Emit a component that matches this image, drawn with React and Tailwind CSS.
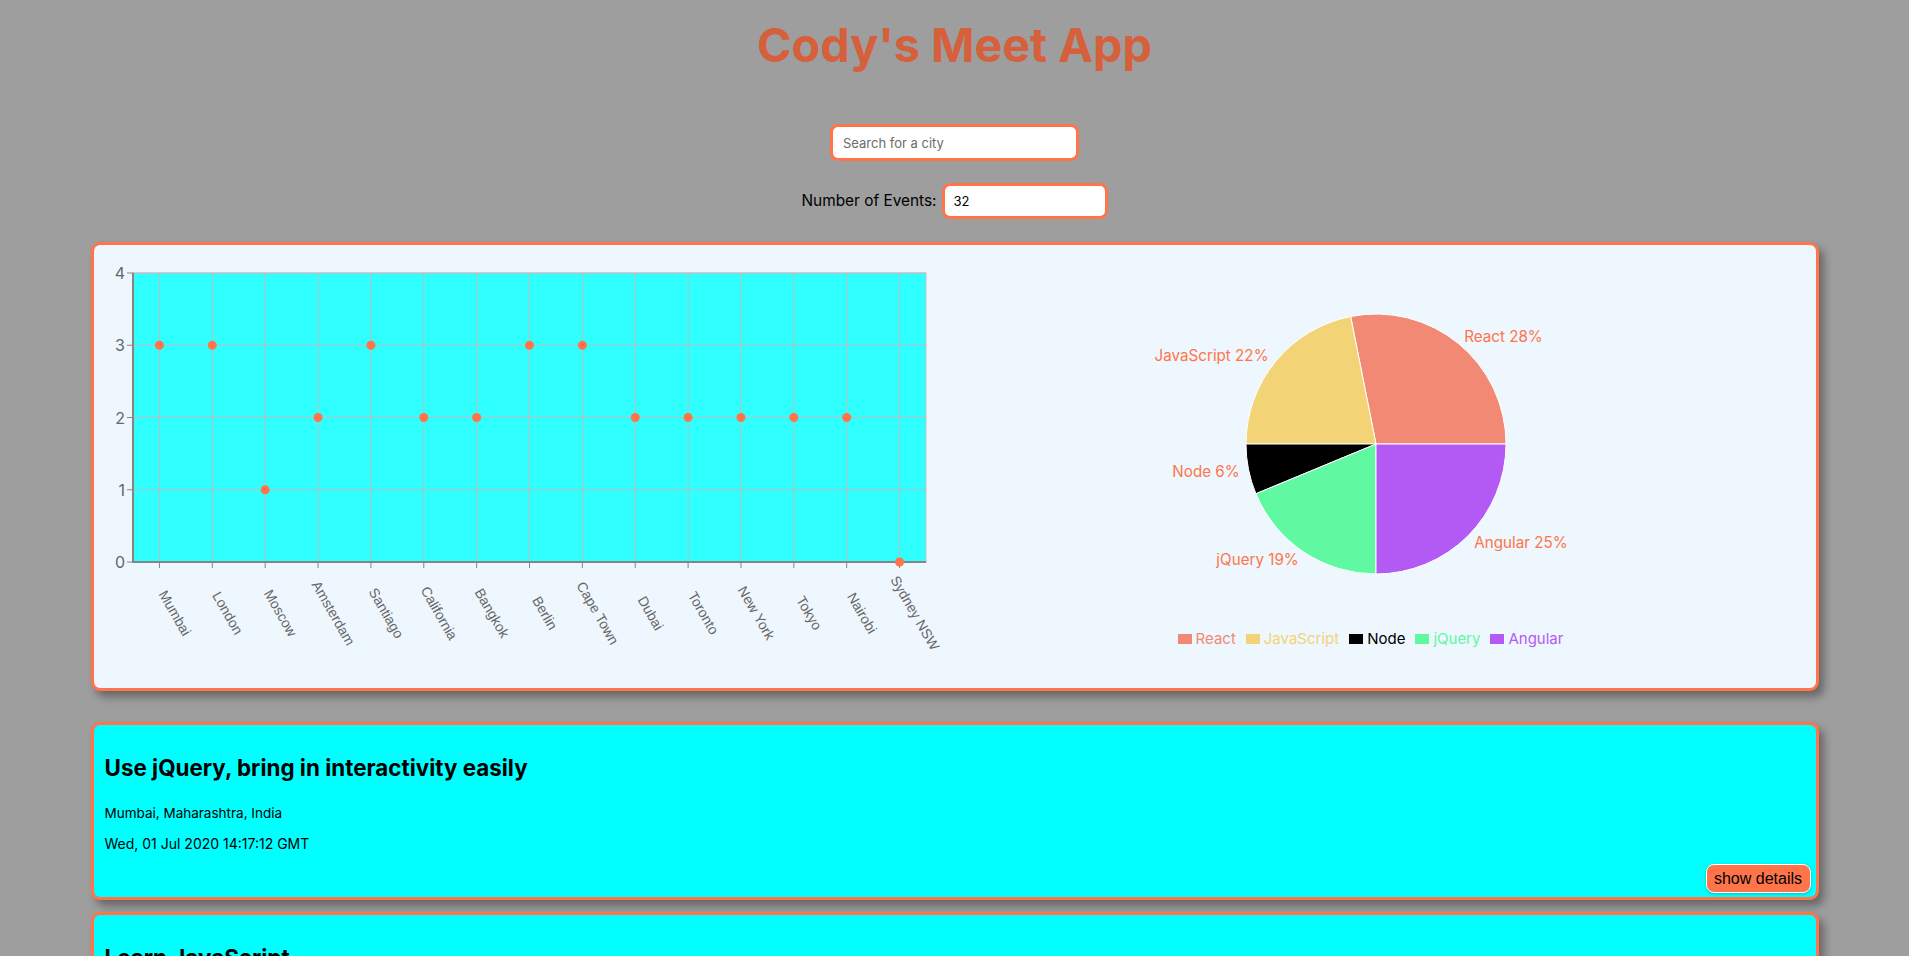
import React from "react";

const CORAL = "#ff7549";

const cityData = [
  ["Mumbai", 3],
  ["London", 3],
  ["Moscow", 1],
  ["Amsterdam", 2],
  ["Santiago", 3],
  ["California", 2],
  ["Bangkok", 2],
  ["Berlin", 3],
  ["Cape Town", 3],
  ["Dubai", 2],
  ["Toronto", 2],
  ["New York", 2],
  ["Tokyo", 2],
  ["Nairobi", 2],
  ["Sydney NSW", 0],
];

const pieData = [
  { name: "React", value: 9, color: "#f28974", label: "React 28%" },
  { name: "JavaScript", value: 7, color: "#f2d476", label: "JavaScript 22%" },
  { name: "Node", value: 2, color: "#000000", label: "Node 6%" },
  { name: "jQuery", value: 6, color: "#60f9a2", label: "jQuery 19%" },
  { name: "Angular", value: 8, color: "#b35af5", label: "Angular 25%" },
];

function ScatterChart() {
  const left = 39;
  const top = 28;
  const right = 832;
  const bottom = 317;
  const band = (right - left) / cityData.length;
  const yOf = (v) => bottom - (v * (bottom - top)) / 4;
  return (
    <svg width="860" height="443" className="block shrink-0">
      <rect x={left} y={top} width={right - left} height={bottom - top} fill="#30ffff" stroke="#c4c4c4" strokeWidth="1" />
      {[1, 2, 3, 4].map((v) => (
        <line key={v} x1={left} x2={right} y1={yOf(v)} y2={yOf(v)} stroke="#bdbdbd" strokeWidth="1" />
      ))}
      {cityData.map((d, i) => {
        const x = left + band * (i + 0.5);
        return <line key={d[0]} x1={x} x2={x} y1={top} y2={bottom} stroke="#bdbdbd" strokeWidth="1" />;
      })}
      <line x1={left} x2={left} y1={top} y2={bottom + 1} stroke="#858585" strokeWidth="2" />
      <line x1={left - 1} x2={right} y1={bottom} y2={bottom} stroke="#858585" strokeWidth="2" />
      {[0, 1, 2, 3, 4].map((v) => (
        <g key={v}>
          <line x1={left - 6} x2={left} y1={yOf(v)} y2={yOf(v)} stroke="#858585" strokeWidth="1" />
          <text x={left - 8} y={yOf(v)} textAnchor="end" dominantBaseline="central" fill="#666" fontSize="16" fontFamily="Inter, sans-serif">
            {v}
          </text>
        </g>
      ))}
      {cityData.map((d, i) => {
        const x = left + band * (i + 0.5);
        const lx = x + 15.5;
        const ly = 368;
        return (
          <g key={d[0]}>
            <line x1={x} x2={x} y1={bottom} y2={bottom + 6} stroke="#858585" strokeWidth="1" />
            <text
              x={lx}
              y={ly}
              transform={`rotate(60, ${lx}, ${ly})`}
              textAnchor="middle"
              dominantBaseline="central"
              fill="#666"
              fontSize="14"
              fontFamily="'Liberation Sans', Arial, sans-serif"
            >
              {d[0]}
            </text>
          </g>
        );
      })}
      {cityData.map((d, i) => {
        const x = left + band * (i + 0.5);
        return <circle key={d[0]} cx={x} cy={yOf(d[1])} r="4.5" fill={CORAL} />;
      })}
    </svg>
  );
}

function PieChart() {
  const cx = 422;
  const cy = 199;
  const r = 130;
  const total = pieData.reduce((s, d) => s + d.value, 0);
  let acc = 0;
  const pt = (deg, rad) => {
    const a = (deg * Math.PI) / 180;
    return [cx + rad * Math.cos(a), cy - rad * Math.sin(a)];
  };
  return (
    <svg width="844" height="382" className="block">
      {pieData.map((d) => {
        const start = (acc / total) * 360;
        acc += d.value;
        const end = (acc / total) * 360;
        const [x1, y1] = pt(start, r);
        const [x2, y2] = pt(end, r);
        const large = end - start > 180 ? 1 : 0;
        const mid = (start + end) / 2;
        const [lx, ly] = pt(mid, 139);
        const anchor = Math.cos((mid * Math.PI) / 180) >= 0 ? "start" : "end";
        return (
          <g key={d.name}>
            <path d={`M${cx},${cy} L${x1},${y1} A${r},${r} 0 ${large} 0 ${x2},${y2} Z`} fill={d.color} stroke="#fff" strokeWidth="1" />
            <text x={lx} y={ly} textAnchor={anchor} dominantBaseline="central" fill={CORAL} fontSize="15.2" fontFamily="Inter, sans-serif">
              {d.label}
            </text>
          </g>
        );
      })}
    </svg>
  );
}

function Legend() {
  return (
    <div className="flex h-6 items-center justify-center font-['Inter',sans-serif] text-[15px]">
      {pieData.map((d) => (
        <div key={d.name} className="mr-[10px] flex items-center">
          <span className="mr-[4px] inline-block h-[10.5px] w-[14px]" style={{ backgroundColor: d.color }} />
          <span style={{ color: d.color }}>{d.name}</span>
        </div>
      ))}
    </div>
  );
}

function EventCard({ title, location, date }) {
  return (
    <div className="mx-auto flex w-[1728px] flex-col rounded-[9px] border-[3px] border-[#ff7549] bg-[#00ffff] pb-[4px] pl-[11px] pr-[5px] pt-[28px] shadow-[5px_6px_9px_rgba(0,0,0,0.35)]">
      <h2 className="h-[30px] text-[22.4px] font-bold leading-[30px] text-black">{title}</h2>
      <p className="mt-[20px] text-[13.5px] leading-[20px] text-black">{location}</p>
      <p className="mt-[11px] text-[14px] leading-[20px] text-black">{date}</p>
      <button className="mt-[10px] h-[29px] w-[105px] self-end rounded-[8px] border border-white bg-[#ff7549] font-['Liberation_Sans',Arial,sans-serif] text-[16px] text-black shadow-[0_1px_3px_rgba(0,0,0,0.25)]">
        show details
      </button>
    </div>
  );
}

export default function App() {
  return (
    <div className="min-h-screen bg-[#9e9e9e] pb-10 font-['Inter',sans-serif]">
      <div className="flex flex-col items-center">
        <h1 className="mt-[16px] text-[46.7px] font-bold leading-[58px] text-[#d6603b]">Cody's Meet App</h1>
        <input
          type="text"
          placeholder="Search for a city"
          className="mt-[50px] h-[37px] w-[249px] rounded-[8px] border-[3px] border-[#ff7549] bg-white px-[10px] text-[13px] text-black outline-none placeholder:text-[#6b6b6b]"
        />
        <div className="mt-[22px] flex items-center gap-[5px]">
          <label className="text-[15.4px] text-black">Number of Events:</label>
          <input
            type="text"
            defaultValue="32"
            className="h-[36px] w-[166px] rounded-[8px] border-[3px] border-[#ff7549] bg-white px-[9px] text-[13px] text-black outline-none"
          />
        </div>
      </div>

      <div className="mx-auto mt-[23px] flex w-[1728px] rounded-[9px] border-[3px] border-[#ff7549] bg-[#eef6fe] shadow-[5px_6px_9px_rgba(0,0,0,0.35)]">
        <ScatterChart />
        <div className="flex w-[844px] flex-col">
          <PieChart />
          <Legend />
        </div>
      </div>

      <div className="mt-[31px] flex flex-col gap-[12px]">
        <EventCard title="Use jQuery, bring in interactivity easily" location="Mumbai, Maharashtra, India" date="Wed, 01 Jul 2020 14:17:12 GMT" />
        <EventCard title="Learn JavaScript" location="London, UK" date="Wed, 27 May 2020 17:12:47 GMT" />
        <EventCard title="React is Fun" location="Berlin, Germany" date="Tue, 19 May 2020 17:17:49 GMT" />
      </div>
    </div>
  );
}
